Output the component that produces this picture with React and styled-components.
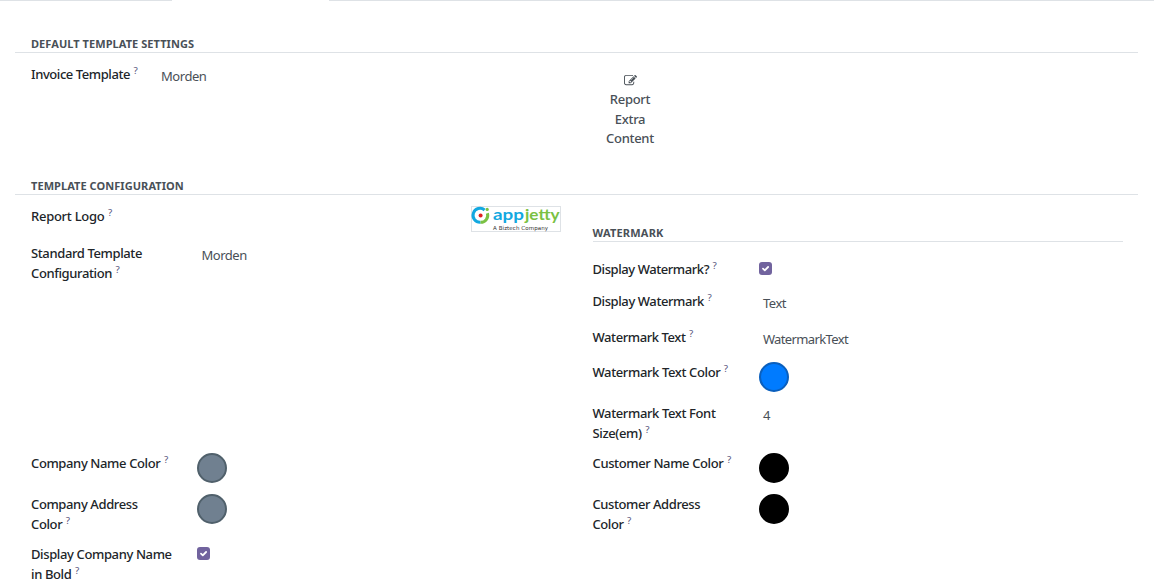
import React from "react";
import styled, { createGlobalStyle } from "styled-components";

const Global = createGlobalStyle`
  * { box-sizing: border-box; }
  body {
    margin: 0;
    background: #fff;
    overflow: hidden;
    font: 400 13px/19.5px "Noto Sans", sans-serif;
    color: #495057;
  }
`;

const Page = styled.main`
  height: 588px;
  overflow: hidden;
`;
const TabStrip = styled.div`
  display: flex;
  justify-content: space-between;
  height: 1px;
`;
const TabEdge = styled.span`
  width: ${(p) => p.$w}px;
  background: #dee2e6;
`;
const Sheet = styled.div`
  padding: 34px 16px 0 15px;
`;
const Section = styled.section`
  height: ${(p) => p.$h || "auto"};
`;
const Title = styled.h2`
  margin: 0;
  height: 18px;
  padding-left: ${(p) => p.$indent}px;
  border-bottom: 1px solid #dee2e6;
  font-size: 11px;
  line-height: 17px;
  font-weight: 700;
  letter-spacing: 0.06px;
  color: #495057;
  text-transform: uppercase;
`;
const Columns = styled.div`
  display: grid;
  grid-template-columns: 561.5px 1fr;
  padding: ${(p) => p.$top}px 16px 0;
`;
const Column = styled.div`
  display: flex;
  flex-direction: column;
`;
const FieldRow = styled.div`
  display: grid;
  grid-template-columns: ${(p) => p.$label || 166.4}px 1fr;
  height: ${(p) => p.$h}px;
`;
const Label = styled.label`
  width: 146px;
  font-weight: 500;
  letter-spacing: ${(p) => p.$track || -0.38}px;
  color: #212529;
`;
const Help = styled.sup`
  margin-left: 3.5px;
  font-size: 9.75px;
  line-height: 0;
  position: relative;
  vertical-align: baseline;
  top: -5px;
  font-weight: 400;
  letter-spacing: 0;
  color: #56547c;
`;
const Value = styled.span`
  padding: 2px 4px 0;
  letter-spacing: ${(p) => p.$track || -0.45}px;
`;
const Swatch = styled.span`
  width: 30px;
  height: 30px;
  margin-top: -1px;
  border-radius: 50%;
  border: 2px solid ${(p) => p.$edge};
  background: ${(p) => p.$color};
`;
const Check = styled.span`
  width: 13px;
  height: 13px;
  margin-top: 2px;
  border-radius: 3px;
  background: #71639e;
  svg { display: block; }
`;
const ReportButton = styled.div`
  width: 75px;
  padding-top: 5px;
  display: flex;
  flex-direction: column;
  align-items: center;
  text-align: center;
  font-weight: 500;
  letter-spacing: -0.3px;
  svg { display: block; margin: 4px 0 3px; }
`;
const ReportLine = styled.span`
  width: 56px;
`;
const LogoFrame = styled.div`
  justify-self: end;
  width: 90px;
  height: 26px;
  margin: -1px 31.5px 0 0;
  border: 1px solid #dee2e6;
  svg { display: block; overflow: visible; }
`;
const SubTitle = styled(Title)`
  width: 530px;
  margin: 17px 0 18px;
  letter-spacing: 0.2px;
`;

function Field({ label, h, labelWidth, track, children }) {
  return (
    <FieldRow $h={h} $label={labelWidth}>
      <Label $track={track}>
        {label}
        <Help>?</Help>
      </Label>
      {children}
    </FieldRow>
  );
}

const Checked = () => (
  <Check>
    <svg width="13" height="13" viewBox="0 0 13 13">
      <path d="M4 6.6 5.8 8.3 9.1 5" fill="none" stroke="#fff" strokeWidth="1.8" strokeLinecap="round" strokeLinejoin="round" />
    </svg>
  </Check>
);

const EditIcon = () => (
  <svg width="13" height="13" viewBox="0 0 1792 1792" fill="#495057">
    <path d="M888 1184l116-116-152-152-116 116v56h96v96h56zm440-720q-16-16-33 1l-350 350q-17 17-1 33t33-1l350-350q17-17 1-33zm80 594v190q0 119-84.5 203.5t-203.5 84.5h-832q-119 0-203.5-84.5t-84.5-203.5v-832q0-119 84.5-203.5t203.5-84.5h832q63 0 117 25 15 7 18 23 3 17-9 29l-49 49q-14 14-32 8-23-6-45-6h-832q-66 0-113 47t-47 113v832q0 66 47 113t113 47h832q66 0 113-47t47-113v-126q0-13 9-22l64-64q15-15 35-7t20 29zm-96-738l288 288-672 672h-288v-288zm444 132l-92 92-288-288 92-92q28-28 68-28t68 28l152 152q28 28 28 68t-28 68z" />
  </svg>
);

const Logo = () => (
  <LogoFrame>
    <svg width="88" height="24" viewBox="0 0 88 24">
      <path d="M12.6 3A7 7 0 1 0 8.5 15.3" fill="none" stroke="#12a8e0" strokeWidth="3" />
      <path d="M8.5 15.3A7 7 0 0 0 15.4 6.2" fill="none" stroke="#7ac143" strokeWidth="3" />
      <circle cx="15.2" cy="2.4" r="1.6" fill="#7ac143" />
      <circle cx="8.6" cy="8.6" r="2" fill="#e02020" />
      <text x="21" y="13" fontFamily="Lato, sans-serif" fontSize="16" fontWeight="700" fill="#12a8e0" textLength="31" lengthAdjust="spacingAndGlyphs">app</text>
      <text x="53" y="13" fontFamily="Lato, sans-serif" fontSize="16" fontWeight="700" fill="#7ac143" textLength="34.5" lengthAdjust="spacingAndGlyphs">jetty</text>
      <text x="21" y="23" fontFamily="DejaVu Sans, sans-serif" fontSize="5.5" letterSpacing="0" fill="#333" textLength="55">A Biztech Company</text>
    </svg>
  </LogoFrame>
);

export default function App() {
  return (
    <Page>
      <Global />
      <TabStrip>
        <TabEdge $w={172} />
        <TabEdge $w={825} />
      </TabStrip>
      <Sheet>
        <Section $h="142px">
          <Title $indent={16}>Default Template Settings</Title>
          <Columns $top={12}>
            <Field label="Invoice Template" h={70} labelWidth={126} track={-0.43}>
              <Value>Morden</Value>
            </Field>
            <ReportButton>
              <EditIcon />
              <ReportLine>Report Extra Content</ReportLine>
            </ReportButton>
          </Columns>
        </Section>
        <Section>
          <Title $indent={16}>Template Configuration</Title>
          <Columns $top={12}>
            <Column>
              <Field label="Report Logo" h={37} track={-0.27}>
                <Logo />
              </Field>
              <Field label="Standard Template Configuration" h={210}>
                <Value>Morden</Value>
              </Field>
              <Field label="Company Name Color" h={41}>
                <Swatch $color="#708090" $edge="#50606b" />
              </Field>
              <Field label="Company Address Color" h={50}>
                <Swatch $color="#708090" $edge="#50606b" />
              </Field>
              <Field label="Display Company Name in Bold" h={40}>
                <Checked />
              </Field>
            </Column>
            <Column>
              <SubTitle $indent={0}>Watermark</SubTitle>
              <Field label="Display Watermark?" h={32} track={-0.43}>
                <Checked />
              </Field>
              <Field label="Display Watermark" h={36} track={-0.41}>
                <Value>Text</Value>
              </Field>
              <Field label="Watermark Text" h={35} track={-0.42}>
                <Value $track={-0.62}>WatermarkText</Value>
              </Field>
              <Field label="Watermark Text Color" h={41}>
                <Swatch $color="#007bff" $edge="#0a5fbd" />
              </Field>
              <Field label="Watermark Text Font Size(em)" h={50}>
                <Value>4</Value>
              </Field>
              <Field label="Customer Name Color" h={41}>
                <Swatch $color="#000" $edge="#000" />
              </Field>
              <Field label="Customer Address Color" h={50} track={-0.42}>
                <Swatch $color="#000" $edge="#000" />
              </Field>
            </Column>
          </Columns>
        </Section>
      </Sheet>
    </Page>
  );
}
